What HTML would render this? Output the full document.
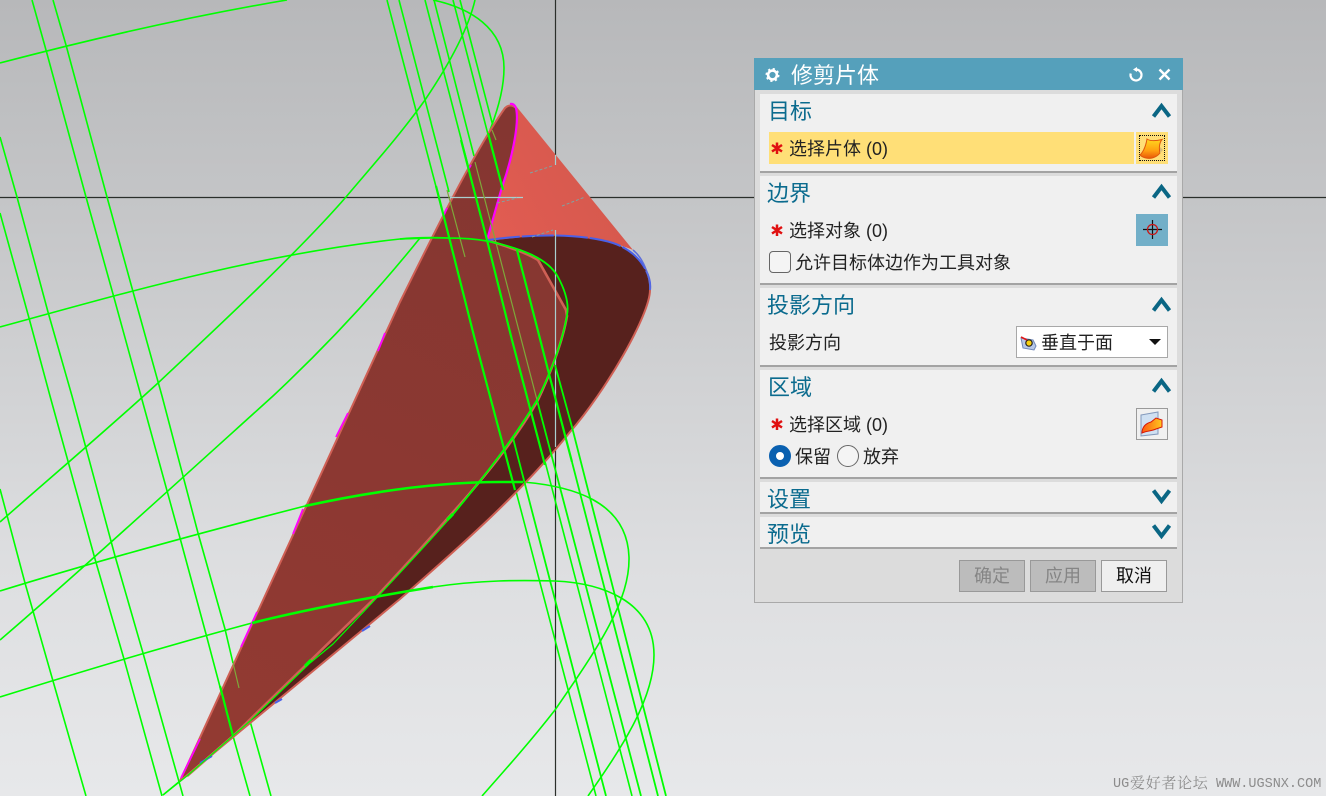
<!DOCTYPE html>
<html><head><meta charset="utf-8"><style>
html,body{margin:0;padding:0}
body{width:1326px;height:796px;overflow:hidden;position:relative;background:linear-gradient(#b7b8ba 0,#c4c5c7 200px,#d2d3d5 400px,#dddee0 560px,#e7e8ea 796px);font-family:"Liberation Sans","Noto Sans CJK SC",sans-serif;color:#222}
svg{position:absolute;left:0;top:0}
.a{position:absolute;white-space:nowrap}
.dlg{left:754px;top:58px;width:427px;height:544px;background:#dcdcdc;border:1px solid #a9a9a9;border-top:0}
.bar{left:754px;top:58px;width:429px;height:32px;background:#55a0bb}
.sec{left:760px;width:417px;background:#f0f0f0;border-bottom:2px solid #a3a3a3;box-sizing:border-box}
.h{font-size:22px;line-height:30px;color:#0b6b8e}
.t{font-size:18px;line-height:26px;color:#222}
.btn{top:560px;width:66px;height:32px;box-sizing:border-box;border:1px solid #999;font-size:18px;line-height:31px;text-align:center}
</style></head><body>
<svg width="1326" height="796" viewBox="0 0 1326 796" fill="none">
<defs>
<linearGradient id="m" gradientUnits="userSpaceOnUse" x1="510" y1="110" x2="200" y2="760"><stop offset="0" stop-color="#843631"/><stop offset="1" stop-color="#933a32"/></linearGradient>
<linearGradient id="l" gradientUnits="userSpaceOnUse" x1="490" y1="240" x2="600" y2="180"><stop offset="0" stop-color="#e25c52"/><stop offset="1" stop-color="#d6594e"/></linearGradient>
</defs>
<path d="M0 197.5H1326M555.5 0V796" stroke="#2b2f2b" stroke-width="1.2"/>
<g stroke="#00ff00" stroke-width="1.6" stroke-linejoin="round">
<polyline points="32,0 46,50 86,197 113,294 141,396 180,538 206,634 233,736 250,796"/>
<polyline points="53,0 66,45 107,197 132,288 162,396 198,533 225,629 233,663"/>
<polyline points="250,721 271,796"/>
<polyline points="0,137 17,197 48,312 72,396 115,556 143,653 183,796"/>
<polyline points="0,213 29,318 50,396 95,559 124,659 162,796"/>
<polyline points="0,489 25,583 53,681 86,796"/>
<path d="M0 63C80 42 180 18 287 0"/>
<path d="M433 0C470 8 504 28 504 68C504 90 497 112 490 130"/>
<path d="M475 0C468 30 448 66 425 100C400 135 373 165 346 197C300 250 220 325 158 383C110 427 50 478 0 522"/>
<path d="M0 327C100 300 250 255 400 239L432 238"/>
<path d="M0 640C70 580 180 480 273 396C320 352 370 300 420 238"/>
<path d="M0 591C100 560 200 533 305 506"/>
<path d="M523 482C570 486 627 500 629 557C630 600 600 645 555 710C530 742 505 770 482 796"/>
<path d="M0 697C80 672 170 645 252 623"/>
<path d="M433 587C480 580 520 580 555 581C600 583 654 600 654 655C654 700 620 750 588 796"/>
<polyline points="163,795 180,781"/>
<path d="M387 0L596 796M399 0L449 192M425 0L632 796M434 0L474 156M453 0L503 192M460 0L494 130"/>
</g>
<path d="M487 240C530 234 580 233 613 243C640 252 652 275 650 290C650 315 605 392 570 432C520 495 450 555 400 599L180 781Z" fill="#57211d"/>
<path d="M180 781L400 302C432 237 475 150 505 108Q512 102 516 108C520 125 510 165 502 187L487 240C505 246 525 252 538 260L566 310 567 316C563 340 550 375 537 402C515 440 482 480 455 510C420 550 377 596 377 596L233 736 187 776Z" fill="url(#m)"/>
<path d="M516 106L633 250C610 240 570 234 533 236L487 241 502 187C510 165 520 125 516 106Z" fill="url(#l)"/>
<g stroke-linejoin="round">
<path d="M180 781L400 302C432 237 475 150 505 108Q510 103 516 108" stroke="#cf5f54" stroke-width="2"/>
<path d="M650 290C650 315 605 392 570 432C520 495 450 555 400 599L180 781" stroke="#cf6055" stroke-width="2"/>
<path d="M487 240C505 246 525 252 538 260L566 310 567 316C563 340 550 375 537 402C515 440 482 480 455 510C420 550 377 596 377 596L233 736 187 776" stroke="#cf6055" stroke-width="2.6"/>
<path d="M510 104Q514 103 516 108C520 125 510 165 502 187L487 240" stroke="#ff00ff" stroke-width="2.2"/>
<path d="M181 778L200 739M241 647L257 612M293 534L303 509M336 437L348 413M378 351L385 333M443 217L447 208M468 170L471 165" stroke="#ff00ff" stroke-width="1.8"/>
<path d="M488 240C530 234 580 233 613 243C640 252 652 275 650 290" stroke="#4a60e8" stroke-width="2" stroke-dasharray="32 2"/>
<path d="M633 250C643 258 650 275 650 290" stroke="#5c6cdc" stroke-width="1.5"/>
<path d="M200 763L212 756M275 703L282 699M362 631L370 626" stroke="#4a60e8" stroke-width="2"/>
</g>
<path d="M450 197.5H523M555.5 155V165M555.5 230V447" stroke="#a9cfcf" stroke-width="1.2"/>
<path d="M530 173L552 166M497 203L517 198M562 206L585 197M532 237L553 230" stroke="#7ea3a3" stroke-width="1" stroke-dasharray="3 2"/>
<path d="M447 190L465 257M475 162L537 400M492 130L496 140M233 663L239 688" stroke="#7ea83a" stroke-width="1.2"/>
<g stroke="#00ff00" stroke-linejoin="round">
<path stroke-width="2.6" d="M305 506C360 494 430 482 500 482H523"/>
<path stroke-width="2.6" d="M252 623C300 611 370 597 433 587"/>
<path stroke-width="1.8" d="M400 239Q420 237 448 238Q470 238 487 241"/>
<path stroke-width="1.8" d="M487 241C520 248 548 258 558 277C566 292 569 305 567 315C563 340 550 375 537 400C515 437 480 482 450 518"/>
<path stroke-width="1.2" d="M450 518C420 552 370 605 333 644L310 663 250 721 187 776 163 795"/>
<path stroke-width="3" d="M447 520L453 514M305 666L311 660"/>
<path stroke-width="2.2" d="M436 186L449 237 475 340 515 490"/>
<path stroke-width="2.2" d="M461 140L487 240 512 340 545 465"/>
<path stroke-width="2.2" d="M488 133L503 190M517 250L530 300 548 370 572 462"/>
<path stroke-width="2.2" d="M220 686L233 736"/>
<path stroke-width="1.8" d="M572 462L658 796M513 438L606 796M537 400L641 796M555 365L572 427 666 796"/>
</g>
</svg>

<div class="a dlg"></div>
<div class="a bar"></div>
<div class="a" style="left:791px;top:60px;font-size:22px;line-height:32px;color:#fff">修剪片体</div>

<div class="a sec" style="top:94px;height:79px"></div>
<div class="a sec" style="top:176px;height:109px"></div>
<div class="a sec" style="top:288px;height:79px"></div>
<div class="a sec" style="top:370px;height:109px"></div>
<div class="a sec" style="top:482px;height:32px"></div>
<div class="a sec" style="top:517px;height:32px"></div>

<div class="a h" style="left:768px;top:97px">目标</div>
<div class="a h" style="left:767px;top:179px">边界</div>
<div class="a h" style="left:767px;top:291px">投影方向</div>
<div class="a h" style="left:768px;top:373px">区域</div>
<div class="a h" style="left:767px;top:485px">设置</div>
<div class="a h" style="left:767px;top:520px">预览</div>

<div class="a" style="left:769px;top:132px;width:365px;height:32px;background:#ffdf77"></div>
<div class="a" style="left:1136px;top:132px;width:32px;height:32px;background:#ffdf77"></div>
<div class="a" style="left:1139px;top:135px;width:26px;height:26px;box-sizing:border-box;border:1px dotted #111"></div>
<div class="a" style="left:1136px;top:214px;width:32px;height:32px;background:#72afc8"></div>
<div class="a" style="left:1016px;top:326px;width:152px;height:32px;box-sizing:border-box;background:#fff;border:1px solid #a8a8a8"></div>
<div class="a" style="left:1136px;top:408px;width:32px;height:32px;box-sizing:border-box;background:#f0f0f0;border:1px solid #9a9a9a"></div>
<div class="a" style="left:769px;top:251px;width:22px;height:22px;box-sizing:border-box;border:1px solid #666;border-radius:4px;background:#f4f4f4"></div>
<div class="a" style="left:769px;top:445px;width:22px;height:22px;box-sizing:border-box;border:7px solid #0a60b0;border-radius:50%;background:#fff"></div>
<div class="a" style="left:837px;top:445px;width:22px;height:22px;box-sizing:border-box;border:1px solid #666;border-radius:50%;background:#f4f4f4"></div>

<div class="a t" style="left:789px;top:136px">选择片体 (0)</div>
<div class="a t" style="left:789px;top:218px">选择对象 (0)</div>
<div class="a t" style="left:795px;top:250px">允许目标体边作为工具对象</div>
<div class="a t" style="left:769px;top:330px">投影方向</div>
<div class="a t" style="left:1041px;top:330px">垂直于面</div>
<div class="a t" style="left:789px;top:412px">选择区域 (0)</div>
<div class="a t" style="left:795px;top:444px">保留</div>
<div class="a t" style="left:863px;top:444px">放弃</div>

<div class="a btn" style="left:959px;background:#bcbcbc;color:#858585">确定</div>
<div class="a btn" style="left:1030px;background:#bcbcbc;color:#858585">应用</div>
<div class="a btn" style="left:1101px;background:#efefef;color:#111">取消</div>

<svg width="1326" height="796" viewBox="0 0 1326 796" fill="none">
<defs>
<linearGradient id="o" x1="0" y1="0" x2="0" y2="1"><stop offset="0" stop-color="#ffd820"/><stop offset=".6" stop-color="#ffa010"/><stop offset="1" stop-color="#e85808"/></linearGradient>
<linearGradient id="f" x1="0" y1="0" x2="1" y2="0"><stop offset="0" stop-color="#ff5a10"/><stop offset="1" stop-color="#ffc820"/></linearGradient>
</defs>
<g stroke="#0a6684" stroke-width="4">
<path d="M1153.500 116.500L1161.500 106 1169.500 116.500M1153.500 197.500L1161.500 187 1169.500 197.500M1153.500 310.500L1161.500 300 1169.500 310.500M1153.500 391.500L1161.500 381 1169.500 391.500"/>
<path d="M1153.500 490.500L1161.500 501 1169.500 490.500M1153.500 525.500L1161.500 536 1169.500 525.500"/>
</g>
<g fill="none" stroke="#fff">
<circle cx="772.500" cy="75" r="4.400" stroke-width="2.600"/>
<circle cx="772.500" cy="75" r="6.200" stroke-width="1.600" stroke-dasharray="2.200 2.670"/>
<path d="M1136.500 69.500A5.500 5.500 0 1 1 1130.700 73.500" stroke-width="2.200"/>
<path d="M1137 67L1137 72 1133 69.500Z" fill="#fff" stroke="none"/>
<path d="M1159.500 69.500L1169.500 79.500M1169.500 69.500L1159.500 79.500" stroke-width="2.400"/>
</g>
<g stroke="#e01010" stroke-width="2.500">
<path d="M777 142.500V154M772 145L782 151.500M782 145L772 151.500"/>
<path d="M777 224.500V236M772 227L782 233.500M782 227L772 233.500"/>
<path d="M777 418.500V430M772 421L782 427.500M782 421L772 427.500"/>
</g>
<path d="M1147 139C1150 141 1156 141 1162 139.500C1159 143 1159 149 1160 153 1156 158 1150 159 1146 158C1143 157.500 1141 156 1140 155 1144 151 1146 145 1147 139Z" fill="url(#o)" stroke="#e0560a" stroke-width="1"/>
<path d="M1160 147L1163 150 1160 153Z" fill="#d9bd7a"/>
<path d="M1152.500 220V239M1143 229.500H1162" stroke="#111" stroke-width="1.200"/>
<circle cx="1152.500" cy="229.500" r="5" stroke="#c81818" stroke-width="1.300"/>
<path d="M1141 415L1158 412V434L1141 436Z" fill="#cfe0f2" stroke="#8298bb"/>
<path d="M1142 433C1142 426 1147 423 1151 422L1156 418 1162 420 1162 427 1156 429C1152 431 1146 431 1142 433Z" fill="url(#f)" stroke="#d81808" stroke-width="1"/>
<path d="M1021 338L1033 340 1036 346 1034 350 1023 348Z" fill="#b8c8e8" stroke="#7088b8"/>
<circle cx="1029" cy="343" r="3.200" fill="#f8d010" stroke="#222" stroke-width="1.200"/>
<path d="M1021 337L1027 340" stroke="#e01818" stroke-width="1.600"/>
<path d="M1149 339H1161L1155 345Z" fill="#111"/>
</svg>

<div class="a" style="left:1113px;top:776px;font:13.5px/17px 'Liberation Mono',monospace;color:#8c8c8c">UG</div>
<div class="a" style="left:1130px;top:776px;font:15px/17px 'Liberation Serif','Noto Serif CJK SC',serif;color:#8c8c8c;letter-spacing:.7px">爱好者论坛</div>
<div class="a" style="left:1216px;top:776px;font:13.5px/17px 'Liberation Mono',monospace;color:#8c8c8c">WWW.UGSNX.COM</div>
</body></html>
